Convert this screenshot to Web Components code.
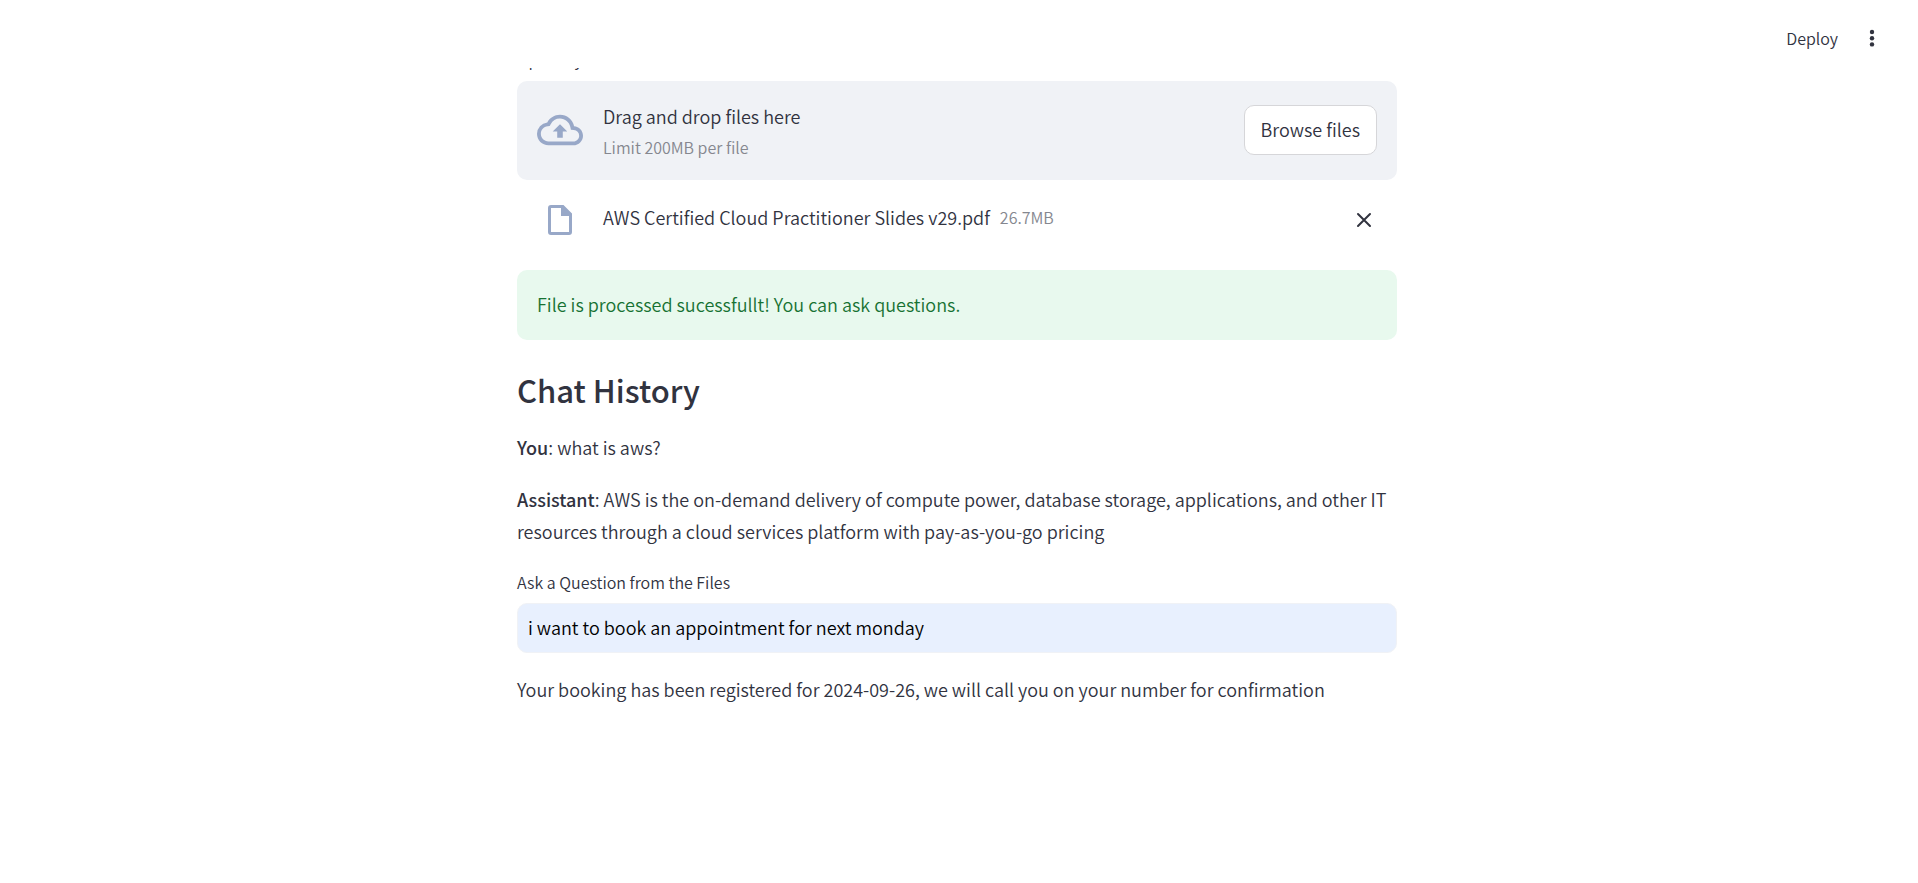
<!DOCTYPE html>
<html lang="en">
<head>
<meta charset="utf-8">
<meta name="viewport" content="width=device-width, initial-scale=1">
<title>Document chat</title>
<style>
  html, body { height: 100%; }
  body {
    margin: 0;
    background: #fff;
    color: #31333f;
    font: 350 18px/32px "Noto Sans CJK SC", "Noto Sans", sans-serif;
  }
</style>
</head>
<body>
<chat-app></chat-app>

<script>
const define = (name, html, setup) => {
  const template = document.createElement('template');
  template.innerHTML = html;
  customElements.define(name, class extends HTMLElement {
    constructor() {
      super();
      this.attachShadow({ mode: 'open' }).append(template.content.cloneNode(true));
      if (setup) setup(this);
    }
  });
};

define('app-toolbar', `
  <style>
    :host { display: flex; flex: none; justify-content: flex-end; align-items: center; gap: 8px; height: 68px; padding: 8px 28px 0 0; box-sizing: border-box; }
    button { display: flex; align-items: center; justify-content: center; border: 0; padding: 0 8px; background: none; color: inherit; font: inherit; font-size: 16px; line-height: 28px; cursor: pointer; }
    svg { display: block; }
  </style>
  <button type="button">Deploy</button>
  <button type="button" aria-label="Main menu">
    <svg width="20" height="20" viewBox="0 0 20 20" fill="currentColor" aria-hidden="true">
      <circle cx="10" cy="4" r="2.2"/><circle cx="10" cy="10.2" r="2.2"/><circle cx="10" cy="16.4" r="2.2"/>
    </svg>
  </button>
`);

define('file-dropzone', `
  <style>
    :host { display: flex; align-items: center; gap: 20px; min-height: 99px; padding: 0 20px 1px; box-sizing: border-box; border-radius: 10px; background: #f0f2f6; }
    svg { display: block; flex: none; color: #98a8c8; }
    .text { display: flex; flex: 1; flex-direction: column; padding-top: 2px; }
    small { color: #85878f; font-size: 16px; line-height: 30px; }
    button { height: 50px; padding: 0 16px 2px; box-sizing: border-box; border: 1px solid #d6d6d9; border-radius: 10px; background: #fff; color: inherit; font: inherit; cursor: pointer; }
  </style>
  <svg width="46" height="46" viewBox="0 0 24 24" fill="currentColor" aria-hidden="true">
    <path d="M19.35 10.04A7.49 7.49 0 0 0 12 4C9.11 4 6.6 5.64 5.35 8.04A5.994 5.994 0 0 0 0 14c0 3.31 2.69 6 6 6h13c2.76 0 5-2.24 5-5 0-2.64-2.05-4.78-4.65-4.96zM19 18H6c-2.21 0-4-1.79-4-4 0-2.05 1.53-3.76 3.56-3.97l1.07-.11.5-.95A5.469 5.469 0 0 1 12 6c2.62 0 4.88 1.86 5.39 4.43l.3 1.5 1.53.11A2.98 2.98 0 0 1 22 15c0 1.65-1.35 3-3 3zM8.2 12.8h2.35V16h2.9v-3.2h2.35L12 9z"/>
  </svg>
  <div class="text"><span><slot></slot></span><small><slot name="limit"></slot></small></div>
  <button type="button">Browse files</button>
`);

define('uploaded-file', `
  <style>
    :host { display: flex; align-items: flex-start; padding: 15px 20px; }
    .icon { display: block; flex: none; margin: 4px 31px 0 11px; color: #98a8c8; }
    .name { margin-right: 10px; }
    small { flex: 1; color: #85878f; font-size: 16px; }
    button { display: flex; border: 0; margin-top: 6px; padding: 5px; background: none; color: inherit; cursor: pointer; }
  </style>
  <svg class="icon" width="24" height="30" viewBox="0 0 24 30" fill="currentColor" aria-hidden="true">
    <path fill-rule="evenodd" d="M3 0H15.5L24 8.5V27a3 3 0 0 1-3 3H3a3 3 0 0 1-3-3V3a3 3 0 0 1 3-3zM3 3V27H21V11H13V3z"/>
  </svg>
  <span class="name"><slot></slot></span><small><slot name="size"></slot></small>
  <button type="button" aria-label="Remove file">
    <svg width="16" height="16" viewBox="0 0 16 16" fill="none" stroke="currentColor" stroke-width="2" stroke-linecap="round" aria-hidden="true"><path d="M2 2l12 12M14 2L2 14"/></svg>
  </button>
`);

define('success-alert', `
  <style>
    :host { display: block; padding: 18px 20px 20px; border-radius: 10px; background: #e8f9ee; color: #177233; }
  </style>
  <div role="alert"><slot></slot></div>
`);

define('chat-message', `
  <style>
    :host { display: block; margin-right: -16px; }
    p { margin: 0; }
  </style>
  <p><slot></slot></p>
`);

define('question-field', `
  <style>
    :host { display: flex; flex-direction: column; gap: 6px; }
    label { font-size: 16px; line-height: 30px; }
    input { width: 100%; height: 50px; box-sizing: border-box; border: 1px solid #f0f2f6; border-radius: 10px; padding: 0 10px 2px; background: #e8f0fe; color: #000; font: inherit; }
  </style>
  <label for="question">Ask a Question from the Files</label>
  <input id="question" type="text">
`, host => { host.shadowRoot.querySelector('input').value = 'i want to book an appointment for next monday'; });

define('chat-app', `
  <style>
    :host { display: flex; flex-direction: column; height: 100%; }
    main { flex: 1; min-height: 0; overflow: hidden; }
    .column { display: flex; flex-direction: column; gap: 20px; max-width: 880px; margin: -23px auto 0; padding-right: 4px; }
    .upload { display: flex; flex-direction: column; }
    .upload-label { margin-bottom: 8px; font-size: 16px; line-height: 28px; }
    uploaded-file { margin-top: 6px; }
    h2 { margin: 0; padding-top: 8px; font-size: 31px; line-height: 43px; font-weight: 500; }
    strong { font-weight: 500; }
  </style>
  <app-toolbar></app-toolbar>
  <main>
    <div class="column">
      <section class="upload">
        <span class="upload-label">Upload your files</span>
        <file-dropzone>Drag and drop files here<span slot="limit">Limit 200MB per file</span></file-dropzone>
        <uploaded-file>AWS Certified Cloud Practitioner Slides v29.pdf<span slot="size">26.7MB</span></uploaded-file>
      </section>
      <success-alert>File is processed sucessfullt! You can ask questions.</success-alert>
      <h2>Chat History</h2>
      <chat-message><strong>You</strong>: what is aws?</chat-message>
      <chat-message><strong>Assistant</strong>: AWS is the on-demand delivery of compute power, database storage, applications, and other IT resources through a cloud services platform with pay-as-you-go pricing</chat-message>
      <question-field></question-field>
      <chat-message>Your booking has been registered for 2024-09-26, we will call you on your number for confirmation</chat-message>
    </div>
  </main>
`);
</script>
</body>
</html>
